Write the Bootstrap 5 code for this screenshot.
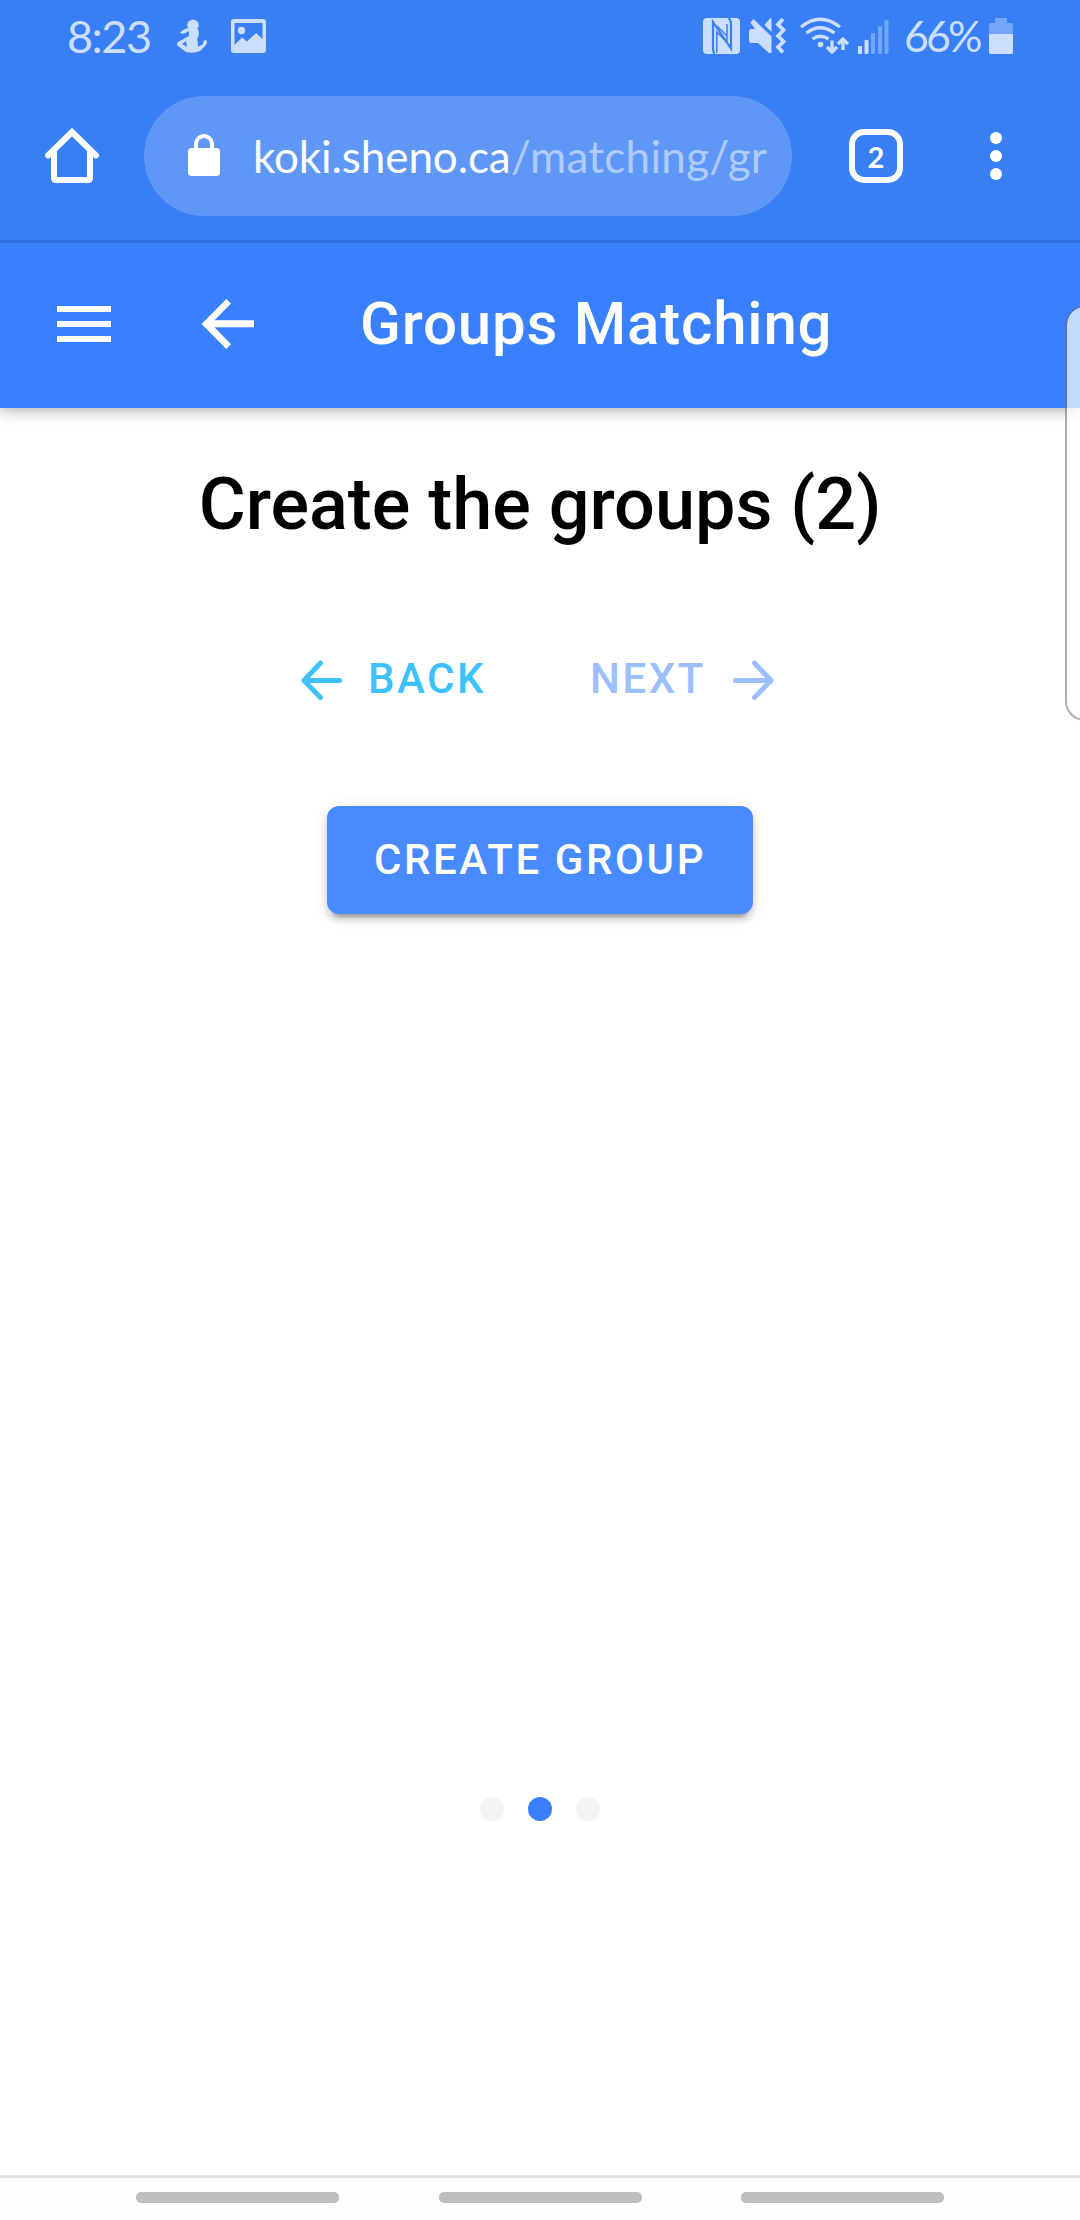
<!DOCTYPE html>
<html lang="en">
<head>
<meta charset="utf-8">
<meta name="viewport" content="width=device-width, initial-scale=1">
<title>Groups Matching</title>
<link href="https://cdn.jsdelivr.net/npm/bootstrap@5.3.0/dist/css/bootstrap.min.css" rel="stylesheet">
<style>
body{font-family:Roboto,sans-serif;width:1080px;height:2220px;overflow:hidden;background:#fff;color:#000}
svg{display:block;flex:none}
.chrome{background:#387ef5;height:243px;border-bottom:3px solid #316fde;z-index:1}
.status{height:96px;padding:16px 67px 0 67px;color:#cbdffd;font-family:Lato,sans-serif}
.status svg{fill:currentColor}
.clock{font-size:45px;line-height:40px;width:84px;letter-spacing:-1.5px;white-space:nowrap}
.percent{font-size:43px;line-height:40px;width:76px;margin-left:15px;letter-spacing:-3px;white-space:nowrap}
.address{height:120px;width:648px;margin-left:43px;background:#5f97f7;border-radius:60px;padding-left:43px;font-family:Lato,sans-serif;font-size:44px;line-height:60px;white-space:nowrap}
.address .host{width:258px;margin-left:32px;letter-spacing:-.1px;color:#fff}
.address .route{color:#afcbfb;letter-spacing:.3px}
.tabs{width:54px;height:54px;border:6px solid #fff;border-radius:15px;margin-left:57px;color:#fff;font:700 29px/1 Lato,sans-serif}
.appbar{height:165px;background:#3880ff;box-shadow:0 2px 14px rgba(0,0,0,.34);padding:0 0 3px 57px}
.appbar h1{font-size:60px;font-weight:500;line-height:72px;letter-spacing:.8px;margin:0 0 0 106px}
.content-head{font-size:72px;font-weight:500;line-height:86px;margin:54px 0 0}
.btn-step{font-size:42px;font-weight:500;letter-spacing:2.52px;line-height:48px;padding:0;border:0;border-radius:12px}
.btn-step svg{margin-top:2px}
.btn-back{color:#3dc2ff}
.btn-next,.btn-next:disabled{color:#9bbfff;opacity:1}
.steps{margin-top:101px;height:60px;padding-left:300px}
.btn-create{width:426px;height:108px;margin-top:97px;background:#488aff;color:#fff;border:0;border-radius:12px;font-size:42px;font-weight:500;letter-spacing:2.6px;padding:0 0 2px;box-shadow:0 9px 3px -6px rgba(0,0,0,.2),0 6px 6px rgba(0,0,0,.14),0 3px 15px rgba(0,0,0,.12)}
.pager{gap:24px;margin-top:auto;margin-bottom:354px}
.pager i{width:24px;height:24px;border-radius:50%;background:#f4f4f4}
.pager .current{background:#3880ff}
.sysnav{height:45px;border-top:3px solid #e1e1e1;background:#fefefe;padding:14px 136px 0}
.sysnav i{width:203px;height:11px;border-radius:5px;background:#bebebe}
.edge{position:absolute;left:1065px;top:305px;width:40px;height:416px;border:2px solid rgba(110,110,110,.55);border-radius:20px;background:rgba(255,255,255,.7);background-clip:padding-box}
</style>
<script src="https://cdn.jsdelivr.net/npm/bootstrap@5.3.0/dist/js/bootstrap.bundle.min.js"></script>
</head>
<body class="position-relative d-flex flex-column">
<header class="chrome position-relative flex-shrink-0">
  <div class="status d-flex justify-content-between">
    <div class="d-flex">
      <span class="clock">8:23</span>
      <svg style="margin-left:25px" width="32" height="40" viewBox="176 16 32 40"><circle cx="193" cy="25.300" r="5.700"/><path d="M190 28Q184 28 180 33Q184 35 189 31L189 36L178 42Q176 44 178 46L186 52Q193 54 200 51L206 45Q208 41 206 40Q203 40 203 44L198 47Q198 42 197 39Q200 35 198 29ZM182 44L186 41L187 47Z" fill-rule="evenodd"/></svg>
      <svg style="margin-left:23px" width="35" height="40" viewBox="231 16 35 40"><path fill-rule="evenodd" d="M234 19h29q3 0 3 3v28q0 3-3 3h-29q-3 0-3-3v-28q0-3 3-3ZM234.500 23v22L242 37.500l5 4L256 33l6.500 6V23Z"/><circle cx="241.500" cy="30.500" r="3.700"/></svg>
    </div>
    <div class="d-flex">
      <svg width="37" height="40" viewBox="702 16 37 40"><rect x="702" y="18" width="37" height="36" rx="4"/><g fill="none" stroke="#387ef5" stroke-width="2.200"><path d="M713.500 54Q712 52 712 48V22L730 48.500V24Q730 20 727.500 18"/><path d="M715.800 53V32L726 42.500V36L716 26M726 40V24"  stroke-width="1.500"/></g></svg>
      <svg style="margin-left:9px" width="37" height="40" viewBox="748 16 37 40"><path d="M748 31q0-2 2-2h4L749.500 22.500L752.500 19L770.500 36.500V53H768L757 43H750q-2 0-2-2ZM763.500 25L769 18.500h1.500v13.500Z"/><path d="M782 19l-5 5.500 5.500 5.500-5.500 6 5.500 5.500-5.500 5.500 5 5.500" fill="none" stroke="currentColor" stroke-width="3.800"/></svg>
      <svg style="margin-left:14px" width="49" height="40" viewBox="799 16 49 40"><g fill="none" stroke="currentColor" stroke-width="3.300"><path d="M800 27Q819 11.500 839 27M805.500 33Q819 22.500 833.500 33M811.500 39Q819 33.500 827.500 39M831 40.500V52M826 47l5 5 5-5M842 50V39.500M837 44l5-5 5 5"/></g><circle cx="819.500" cy="44.500" r="2.800"/></svg>
      <svg style="margin-left:9px" width="31" height="40" viewBox="857 16 31 40"><rect x="857" y="46" width="4" height="8" rx="1"/><rect x="863.500" y="40" width="4" height="14" rx="1"/><g fill="#73a5fa"><rect x="870" y="33" width="4" height="21" rx="1"/><rect x="877" y="26" width="4" height="28" rx="1"/><rect x="883.500" y="20" width="4" height="34" rx="1"/></g></svg>
      <span class="percent">66%</span>
      <svg style="margin-left:9px" width="24" height="40" viewBox="989 16 24 40"><path fill="#73a5fa" d="M995 18h12v5h4q2 0 2 2v9h-24v-9q0-2 2-2h4Z"/><path d="M989 34h24v18q0 2-2 2h-20q-2 0-2-2Z"/></svg>
    </div>
  </div>
  <div class="d-flex align-items-center">
    <svg style="margin-left:45px" width="56" height="60" viewBox="45 126 56 60" fill="none" stroke="#fff" stroke-width="6" stroke-linecap="round" stroke-linejoin="round"><path stroke-linejoin="miter" d="M48 155.500L72 132L96 155.500"/><path d="M54 152V178q0 2 2 2H88q2 0 2-2V152"/></svg>
    <div class="address d-flex align-items-center overflow-hidden">
      <svg width="34" height="48" viewBox="187 132 34 48"><rect x="188" y="148" width="32" height="28" rx="3.500" fill="#fff"/><path d="M196 150v-6a8 8 0 0 1 16 0v6" fill="none" stroke="#fff" stroke-width="4"/></svg>
      <span class="host">koki.sheno.ca</span><span class="route">/matching/gr</span>
    </div>
    <div class="tabs d-flex align-items-center justify-content-center">2</div>
    <svg style="margin-left:87px" width="12" height="48" viewBox="0 0 12 48" fill="#fff"><circle cx="6" cy="6" r="6"/><circle cx="6" cy="24" r="6"/><circle cx="6" cy="42" r="6"/></svg>
  </div>
</header>
<nav class="appbar flex-shrink-0 d-flex align-items-center text-white">
  <svg width="54" height="36" viewBox="0 0 54 36" fill="#fff"><path d="M0 0h54v6H0zM0 15h54v6H0zM0 30h54v6H0z"/></svg>
  <svg style="margin-left:90px" width="53" height="52" viewBox="201 298 53 52"><path d="M254 320.200v7H214.500L231 344.300L226.300 349L201.500 324L226.300 299L231 303.500L214.500 320.200Z" fill="#fff"/></svg>
  <h1>Groups Matching</h1>
</nav>
<main class="flex-grow-1 d-flex flex-column align-items-center">
  <h2 class="content-head">Create the groups (2)</h2>
  <div class="steps d-flex align-items-center align-self-start">
    <button class="btn btn-step btn-back d-flex align-items-center"><svg width="42" height="42" viewBox="0 0 42 42" fill="none" stroke="currentColor" stroke-width="5" stroke-linecap="round" stroke-linejoin="round"><path d="M20.500 4L4 21.500L20.500 38.500M4 21.500H39.500"/></svg><span style="margin-left:26px">BACK</span></button>
    <button class="btn btn-step btn-next d-flex align-items-center" style="margin-left:104px" disabled><span>NEXT</span><svg style="margin-left:27px" width="42" height="42" viewBox="0 0 42 42" fill="none" stroke="currentColor" stroke-width="5" stroke-linecap="round" stroke-linejoin="round"><path d="M21.500 4L38 21.500L21.500 38.500M38 21.500H2.500"/></svg></button>
  </div>
  <button class="btn btn-create">CREATE GROUP</button>
  <div class="pager d-flex"><i></i><i class="current"></i><i></i></div>
</main>
<footer class="sysnav flex-shrink-0 d-flex justify-content-between"><i></i><i></i><i></i></footer>
<aside class="edge"></aside>
</body>
</html>
